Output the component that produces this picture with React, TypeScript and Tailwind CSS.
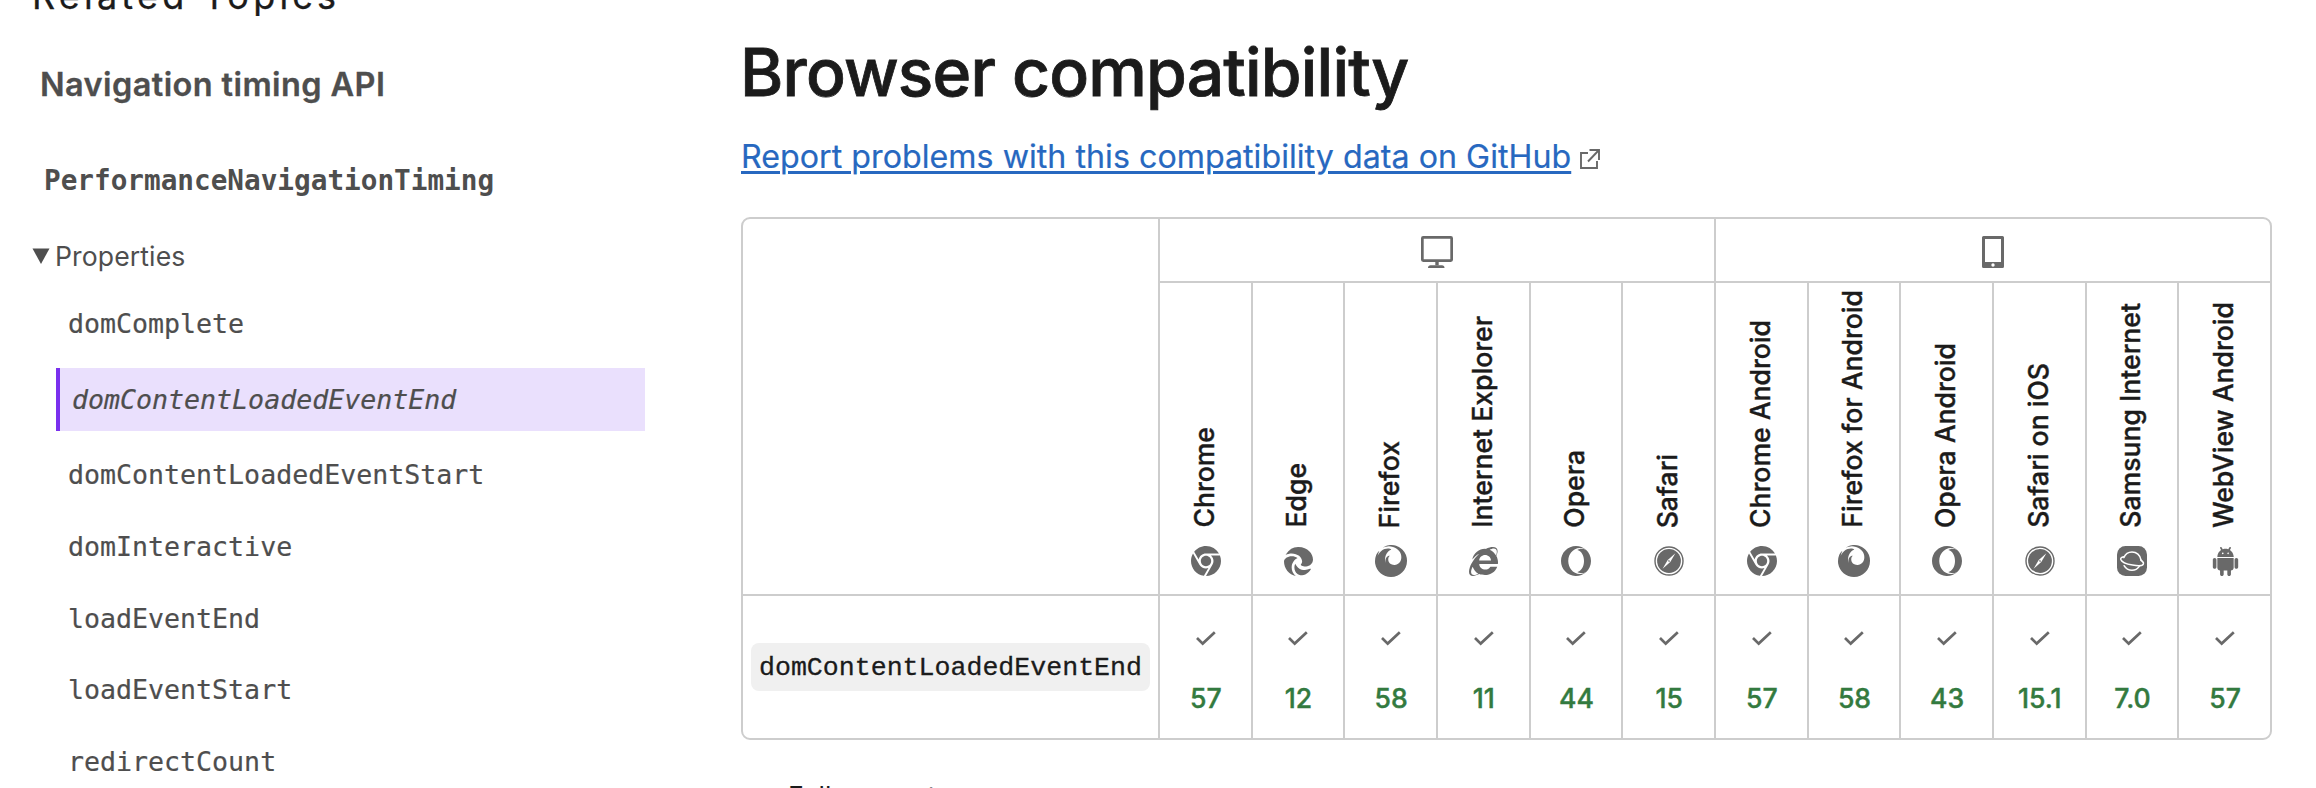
import type { ReactNode } from "react";
import { FaChrome, FaEdge, FaInternetExplorer } from "react-icons/fa6";
import { ImAndroid, ImOpera } from "react-icons/im";
import { SiFirefox } from "react-icons/si";

function SafariIcon() {
  return (
    <svg width="30" height="30" viewBox="0 0 30 30" fill="none">
      <circle cx="15" cy="15" r="14" stroke="currentColor" strokeWidth="1.4" />
      <circle cx="15" cy="15" r="11.9" fill="currentColor" />
      <path d="M21.4 7.2 16.3 16.1 13.7 13.9Z" fill="#fff" />
      <path d="M8.6 22.8 13.7 13.9 16.3 16.1Z" fill="#fff" />
      <circle cx="15" cy="15" r="0.8" fill="currentColor" />
    </svg>
  );
}

function SamsungIcon() {
  return (
    <svg width="30" height="30" viewBox="0 0 30 30" fill="none">
      <rect width="30" height="30" rx="8.5" fill="currentColor" />
      <g stroke="#fff" strokeWidth="1.5" strokeLinecap="round">
        <path d="M6.8 11.6C8.3 8 11.4 5.9 15 5.9c4.6 0 8.2 3.3 8.9 7.8" />
        <path d="M22.3 20.4c-1.7 2.5-4.3 3.9-7.3 3.9-3.4 0-6.3-1.8-7.9-4.6" />
        <path d="M6.6 10.8C4.5 11.3 3.4 12.1 3.8 13.5c.8 2.4 5.7 4.6 11.7 5.6 5.3.9 10.2.8 10.9-1.2.4-1.3-.7-2.6-2.7-3.9" />
      </g>
    </svg>
  );
}

function DesktopIcon() {
  return (
    <svg width="32" height="32" viewBox="0 0 32 32" fill="none">
      <rect x="1.35" y="1.35" width="29.3" height="23.3" rx="0.8" stroke="currentColor" strokeWidth="2.7" />
      <path d="M14.3 25h3.4v4.300h-3.400z" fill="currentColor" />
      <path d="M7 32c0-1.900 1-2.700 2.500-2.700h11.500c1.500 0 2.500.8 2.500 2.700z" fill="currentColor" />
    </svg>
  );
}

function MobileIcon() {
  return (
    <svg width="22" height="32" viewBox="0 0 22 32">
      <path
        fillRule="evenodd"
        fill="currentColor"
        d="M1.5 0h19A1.5 1.5 0 0 1 22 1.5v29a1.5 1.5 0 0 1-1.5 1.5h-19A1.5 1.5 0 0 1 0 30.5v-29A1.5 1.5 0 0 1 1.5 0zM3 3v23h16V3zM11 27.3a1.7 1.7 0 1 0 0 3.4 1.7 1.7 0 0 0 0-3.4z"
      />
    </svg>
  );
}

function ExternalIcon() {
  return (
    <svg width="20" height="20" viewBox="0 0 20 20" fill="none" stroke="#696969" strokeWidth="1.9">
      <path d="M8 4H1v15h16v-7" />
      <path d="M9.5 1H19v10" />
      <path d="M8 12.5 18.5 1.5" />
    </svg>
  );
}

function CheckIcon() {
  return (
    <svg width="20" height="15" viewBox="0 0 20 15" fill="none" stroke="#696969" strokeWidth="2.7">
      <path d="M1 7 6.7 12.6 18.8 1.2" />
    </svg>
  );
}

const chrome = <FaChrome size={30} />;
const firefox = <SiFirefox size={32} />;
const opera = <ImOpera size={30} />;
const safari = <SafariIcon />;

const browsers: { name: string; icon: ReactNode; version: string }[] = [
  { name: "Chrome", icon: chrome, version: "57" },
  { name: "Edge", icon: <FaEdge size={29} />, version: "12" },
  { name: "Firefox", icon: firefox, version: "58" },
  { name: "Internet Explorer", icon: <FaInternetExplorer size={29} />, version: "11" },
  { name: "Opera", icon: opera, version: "44" },
  { name: "Safari", icon: safari, version: "15" },
  { name: "Chrome Android", icon: chrome, version: "57" },
  { name: "Firefox for Android", icon: firefox, version: "58" },
  { name: "Opera Android", icon: opera, version: "43" },
  { name: "Safari on iOS", icon: safari, version: "15.1" },
  { name: "Samsung Internet", icon: <SamsungIcon />, version: "7.0" },
  { name: "WebView Android", icon: <ImAndroid size={29} />, version: "57" },
];

const properties = [
  "domComplete",
  "domContentLoadedEventEnd",
  "domContentLoadedEventStart",
  "domInteractive",
  "loadEventEnd",
  "loadEventStart",
  "redirectCount",
];

const current = "domContentLoadedEventEnd";

function Sidebar() {
  return (
    <aside className="w-[645px] shrink-0 text-[#4e4e4e]">
      <h4 className="-mt-[24px] h-10 pl-8 text-[36px] leading-10 tracking-[4.2px] whitespace-nowrap text-[#1b1b1b] [-webkit-text-stroke:0.3px_#1b1b1b]">
        Related Topics
      </h4>
      <div className="mt-[49px] h-10 pl-[40px] text-[32.5px] leading-10 font-semibold tracking-[0.4px] [-webkit-text-stroke:0.3px_#4e4e4e]">
        Navigation timing API
      </div>
      <div className="mt-14 h-10 pl-[44px] font-['DejaVu_Sans_Mono',monospace] text-[27.7px] leading-10 font-bold">
        PerformanceNavigationTiming
      </div>
      <div className="mt-[35px] flex h-10 items-center pl-8 text-[26.6px] leading-10">
        <svg width="18" height="16" viewBox="0 0 18 16">
          <path d="M.5.5h17L9 16z" fill="currentColor" />
        </svg>
        <span className="pl-[5px] tracking-[0.1px]">Properties</span>
      </div>
      <ul className="mt-3 pl-14 font-['DejaVu_Sans_Mono',monospace] text-[26.6px] [-webkit-text-stroke:0.2px_#4e4e4e]">
        {properties.map((name) =>
          name === current ? (
            <li
              key={name}
              className="my-2 flex h-[63px] items-center border-l-4 border-[#7a30ee] bg-[#eae0fd] pt-0.5 pl-3 italic"
            >
              {name}
            </li>
          ) : (
            <li key={name} className="flex h-[71.75px] items-center pt-px pl-3">
              {name}
            </li>
          ),
        )}
      </ul>
    </aside>
  );
}

function CompatTable() {
  return (
    <div className="mt-[40px] grid w-[1531px] grid-cols-[415px_repeat(12,minmax(0,1fr))] grid-rows-[62px_313px_144px] overflow-hidden rounded-[9px] border-2 border-[#cdcdcd] text-[26.6px] font-medium text-[#1b1b1b]">
      <div className="row-span-2" />
      <div className="col-span-6 flex items-center justify-center border-l-2 border-[#cdcdcd] pt-1 text-[#696969]">
        <DesktopIcon />
      </div>
      <div className="col-span-6 flex items-center justify-center border-l-2 border-[#cdcdcd] pt-1 text-[#696969]">
        <MobileIcon />
      </div>
      {browsers.map((b) => (
        <div
          key={b.name}
          className="flex flex-col items-center justify-end border-t-2 border-l-2 border-[#cdcdcd] pb-[17px] pl-px"
        >
          <span className="mr-[4px] rotate-180 leading-8 whitespace-nowrap [writing-mode:vertical-rl] [-webkit-text-stroke:0.4px_#1b1b1b]">
            {b.name}
          </span>
          <span className="mt-[17px] flex size-8 items-center justify-center text-[#696969]">{b.icon}</span>
        </div>
      ))}
      <div className="flex items-center justify-center border-t-2 border-[#cdcdcd]">
        <code className="h-12 rounded-lg bg-[#f0f0f0] px-2 font-['Liberation_Mono',monospace] text-[26.6px] leading-[50px] font-normal [-webkit-text-stroke:0.3px_#1b1b1b]">
          domContentLoadedEventEnd
        </code>
      </div>
      {browsers.map((b) => (
        <div
          key={b.name}
          className="flex flex-col items-center border-t-2 border-l-2 border-[#cdcdcd] pt-[35px] pl-px text-[#337a3f]"
        >
          <CheckIcon />
          <span className="mt-8 leading-10 [-webkit-text-stroke:0.4px_#337a3f]">{b.version}</span>
        </div>
      ))}
    </div>
  );
}

export default function App() {
  return (
    <div className="flex h-[788px] w-[2316px] overflow-hidden bg-white font-['Inter',sans-serif]">
      <Sidebar />
      <main className="pl-24 text-[#1b1b1b]">
        <h2 className="mt-8 -ml-px h-20 text-[66px] leading-[80px] font-medium tracking-[-0.82px] [-webkit-text-stroke:0.8px_#1b1b1b]">
          Browser compatibility
        </h2>
        <div className="mt-[25px] flex h-10 items-center">
          <a
            href="#"
            className="text-[32.2px] leading-10 tracking-[0.02px] text-[#2768c0] underline decoration-[3px] underline-offset-[3px] [-webkit-text-stroke:0.2px_#2768c0]"
          >
            Report problems with this compatibility data on GitHub
          </a>
          <span className="ml-[9px] pt-[3px]">
            <ExternalIcon />
          </span>
        </div>
        <CompatTable />
        <div className="mt-[36px] pl-[47px] text-[26.6px] leading-10">Full support</div>
      </main>
    </div>
  );
}
